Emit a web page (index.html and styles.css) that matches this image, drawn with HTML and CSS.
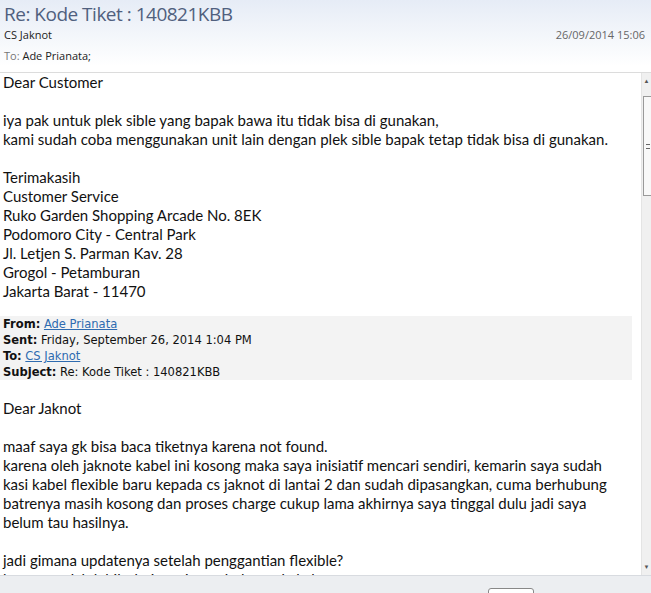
FILE: index.html
```html
<!DOCTYPE html>
<html lang="en">
  <head>
    <meta charset="UTF-8" />
    <meta name="viewport" content="width=device-width, initial-scale=1.0" />
    <title>Re: Kode Tiket : 140821KBB</title>
    <link rel="stylesheet" href="styles.css">
  </head>
  <body>
    <div class="mail-header">
      <div class="subject">Re: Kode Tiket : 140821KBB</div>
      <div class="sender-row">
        <span class="sender">CS Jaknot</span>
        <span class="date">26/09/2014 15:06</span>
      </div>
      <div class="to-row"><span class="to-label">To:</span> Ade Prianata;</div>
    </div>

    <div class="mail-view">
      <div class="mail-body">
        <p>Dear Customer</p>
        <p>iya pak untuk plek sible yang bapak bawa itu tidak bisa di gunakan,<br>
          kami sudah coba menggunakan unit lain dengan plek sible bapak tetap tidak bisa di gunakan.</p>
        <p>Terimakasih<br>
          Customer Service<br>
          Ruko Garden Shopping Arcade No. 8EK<br>
          Podomoro City - Central Park<br>
          Jl. Letjen S. Parman Kav. 28<br>
          Grogol - Petamburan<br>
          Jakarta Barat - 11470</p>

        <div class="quote-head">
          <div><b>From:</b> <a href="#">Ade Prianata</a></div>
          <div><b>Sent:</b> Friday, September 26, 2014 1:04 PM</div>
          <div><b>To:</b> <a href="#">CS Jaknot</a></div>
          <div><b>Subject:</b> Re: Kode Tiket : 140821KBB</div>
        </div>

        <p>Dear Jaknot</p>
        <p>maaf saya gk bisa baca tiketnya karena not found.<br>
          karena oleh jaknote kabel ini kosong maka saya inisiatif mencari sendiri, kemarin saya sudah<br>
          kasi kabel flexible baru kepada cs jaknot di lantai 2 dan sudah dipasangkan, cuma berhubung<br>
          batrenya masih kosong dan proses charge cukup lama akhirnya saya tinggal dulu jadi saya<br>
          belum tau hasilnya.</p>
        <p>jadi gimana updatenya setelah penggantian flexible?<br>
          karena sudah lebih dari seminggu belum ada kabar</p>
      </div>
      <div class="scrollbar">
        <div class="arrow">&#9650;</div>
        <div class="track">
          <div class="thumb"><span class="grip"></span></div>
        </div>
        <div class="arrow">&#9660;</div>
      </div>
    </div>

    <div class="status-bar">
      <span class="status-btn"></span>
    </div>
  </body>
</html>
```

FILE: styles.css
```css
body {
  margin: 0;
  width: 651px;
  height: 593px;
  overflow: hidden;
  background: #fff;
  font-family: "Open Sans", "Noto Sans", sans-serif;
}

.mail-header {
  height: 73px;
  padding: 0 6px 0 4px;
  box-sizing: border-box;
  background: linear-gradient(#e6ecf6, #f7f9fc 45px, #fff 66px);
  border-bottom: 1px solid #dcdcdc;
}

.subject {
  font-size: 19px;
  letter-spacing: -0.5px;
  line-height: 28px;
  color: #50607e;
}

.sender-row {
  display: flex;
  justify-content: space-between;
  font-size: 11px;
  line-height: 14px;
  color: #222;
}

.date {
  color: #666;
}

.to-row {
  margin-top: 7px;
  font-size: 11px;
  line-height: 14px;
  color: #222;
}

.to-label {
  color: #777;
}

.mail-view {
  display: flex;
  height: 502px;
  overflow: hidden;
}

.mail-body {
  flex: 1;
  padding: 0 0 0 3px;
  font-family: "Lato", "Open Sans", sans-serif;
  font-size: 15px;
  line-height: 19px;
  color: #111;
  white-space: nowrap;
  overflow: hidden;
}

.mail-body p {
  margin: 0 0 19px;
}

.quote-head {
  margin: -4px 9px 19px -3px;
  padding: 0 3px;
  background: #f3f3f3;
  font-family: "DejaVu Sans Condensed", "Liberation Sans", sans-serif;
  font-size: 12.8px;
  line-height: 16px;
  color: #111;
}

.quote-head a {
  color: #2e6bb0;
}

.scrollbar {
  width: 9px;
  display: flex;
  flex-direction: column;
  background: #f0f0f0;
  border-left: 1px solid #e4e4e4;
}

.arrow {
  height: 16px;
  font-size: 6px;
  line-height: 16px;
  text-align: center;
  color: #555;
}

.track {
  flex: 1;
  padding-top: 7px;
}

.thumb {
  height: 98px;
  margin-left: 1px;
  border: 1px solid #999;
  border-right: none;
  background: #f8f8f8;
  display: flex;
  align-items: center;
  justify-content: center;
}

.grip {
  width: 4px;
  height: 5px;
  border-top: 1px solid #666;
  border-bottom: 1px solid #666;
  box-sizing: border-box;
}

.status-bar {
  height: 18px;
  background: #eceef1;
  border-top: 1px solid #d8dbe0;
  position: relative;
}

.status-btn {
  position: absolute;
  left: 488px;
  top: 12px;
  width: 44px;
  height: 10px;
  border: 1px solid #888;
  border-radius: 3px;
  background: #fff;
}
```
